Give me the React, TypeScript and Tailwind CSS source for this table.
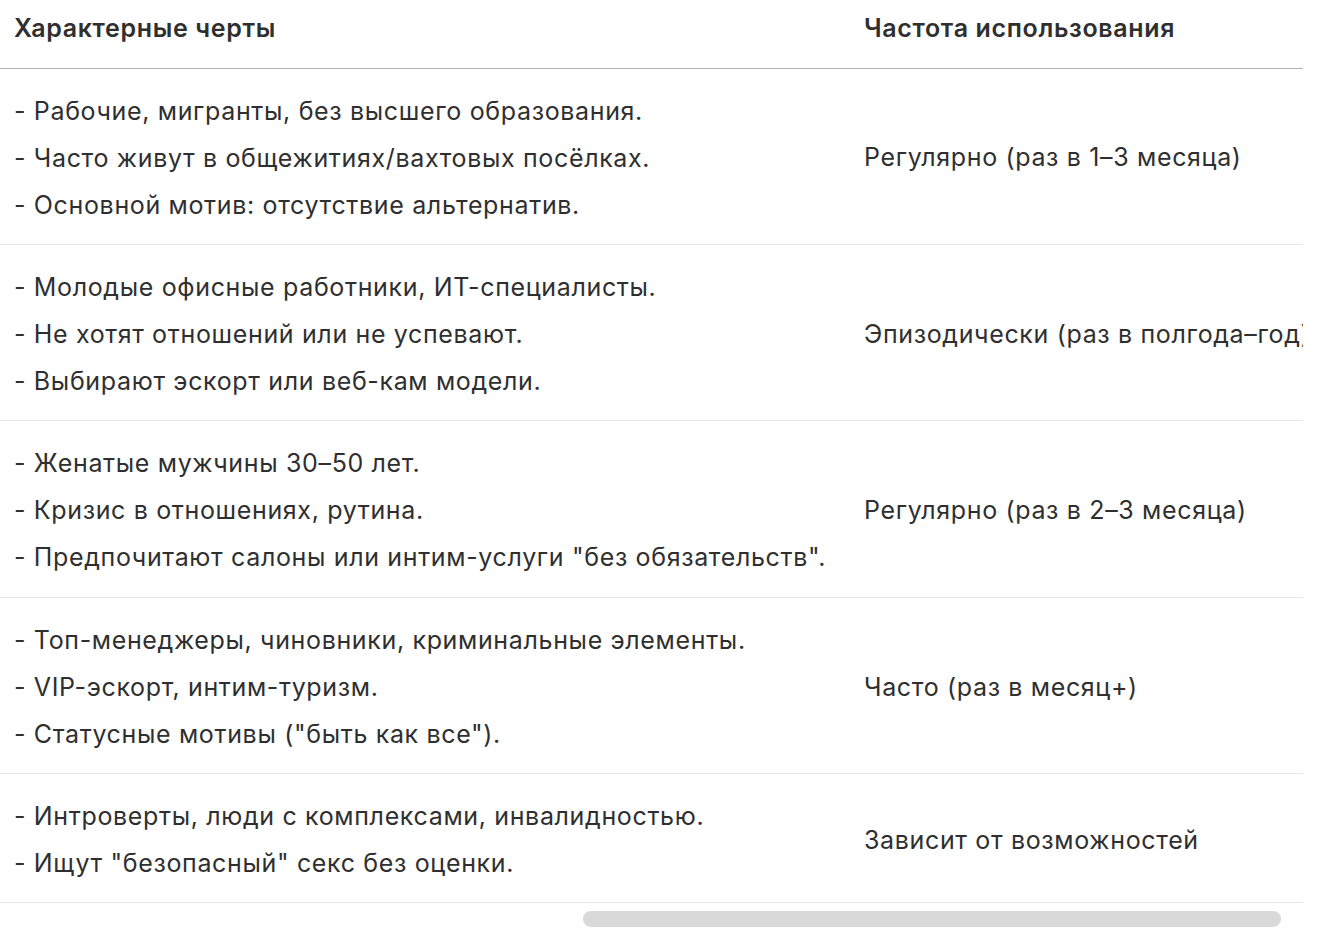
const rows = [
  {
    traits: [
      "- Рабочие, мигранты, без высшего образования.",
      "- Часто живут в общежитиях/вахтовых посёлках.",
      "- Основной мотив: отсутствие альтернатив.",
    ],
    freq: "Регулярно (раз в 1–3 месяца)",
  },
  {
    traits: [
      "- Молодые офисные работники, ИТ-специалисты.",
      "- Не хотят отношений или не успевают.",
      "- Выбирают эскорт или веб-кам модели.",
    ],
    freq: "Эпизодически (раз в полгода–год)",
  },
  {
    traits: [
      "- Женатые мужчины 30–50 лет.",
      "- Кризис в отношениях, рутина.",
      '- Предпочитают салоны или интим-услуги "без обязательств".',
    ],
    freq: "Регулярно (раз в 2–3 месяца)",
  },
  {
    traits: [
      "- Топ-менеджеры, чиновники, криминальные элементы.",
      "- VIP-эскорт, интим-туризм.",
      '- Статусные мотивы ("быть как все").',
    ],
    freq: "Часто (раз в месяц+)",
  },
  {
    traits: [
      "- Интроверты, люди с комплексами, инвалидностью.",
      '- Ищут "безопасный" секс без оценки.',
    ],
    freq: "Зависит от возможностей",
  },
];

export default function App() {
  return (
    <div className="min-h-[938px] bg-white font-['Inter',sans-serif] text-[25px] tracking-[0.65px] text-[#2f2f2f]">
      <div className="w-[1303px] overflow-x-hidden">
        <table className="w-[1600px] border-collapse text-left">
          <thead>
            <tr className="border-b border-[#b3b3b3]">
              <th className="h-[68px] w-[850px] px-[14px] pb-[10px] align-middle font-semibold">
                Характерные черты
              </th>
              <th className="h-[68px] px-[14px] pb-[10px] align-middle font-semibold">
                Частота использования
              </th>
            </tr>
          </thead>
          <tbody>
            {rows.map((row) => (
              <tr key={row.freq} className="border-b border-[#e6e6e6]">
                <td className="px-[14px] pt-[19px] pb-[15.4px] align-middle">
                  {row.traits.map((line) => (
                    <div key={line} className="whitespace-nowrap leading-[47px]">
                      {line}
                    </div>
                  ))}
                </td>
                <td className="whitespace-nowrap px-[14px] pt-[4px] align-middle">
                  {row.freq}
                </td>
              </tr>
            ))}
          </tbody>
        </table>
      </div>
      <div className="w-[1303px] pt-[8px]">
        <div className="ml-[583px] h-[16px] w-[698px] rounded-full bg-[#d9d9d9]" />
      </div>
    </div>
  );
}
